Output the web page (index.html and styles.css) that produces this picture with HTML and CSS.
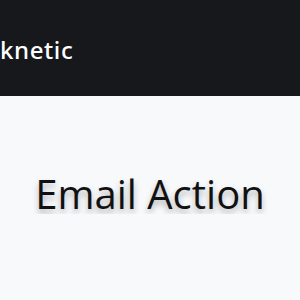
FILE: index.html
```html
<!DOCTYPE html>
<html>
<head>
<meta charset="utf-8">
<link rel="stylesheet" href="styles.css">
</head>
<body>
<header class="topbar"><span class="brand">knetic</span></header>
<main class="hero"><h1 class="title">Email Action</h1></main>
</body>
</html>
```
FILE: styles.css
```css
html, body { margin: 0; padding: 0; }
body { background: #f8f9fb; font-family: "Open Sans", sans-serif; overflow: hidden; }
.topbar { height: 96px; background: #16181c; display: flex; align-items: center; }
.brand { color: #ffffff; font-family: "Noto Sans", sans-serif; font-size: 24px; font-weight: 500; letter-spacing: 0.6px; margin-top: 2px; }
.hero { display: flex; justify-content: center; padding-top: 78px; }
.title { margin: 0; font-size: 40px; font-weight: 400; color: #111; line-height: 1; text-shadow: 0 4px 6px rgba(0,0,0,0.3); }
```
